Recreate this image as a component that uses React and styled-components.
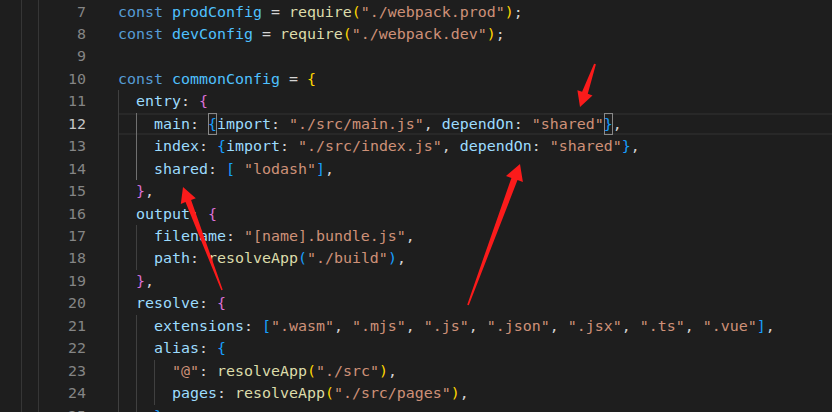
import React from "react";
import styled, { createGlobalStyle } from "styled-components";

const CHAR = 9;
const LINE = 22.46;

const colors = {
  kw: "#569cd6",
  cst: "#4fc1ff",
  fn: "#dcdcaa",
  str: "#ce9178",
  prop: "#9cdcfe",
  p: "#d4d4d4",
  b1: "#ffd700",
  b2: "#da70d6",
  b3: "#179fff",
};

// [line number, indent level, tokens]
const lines = [
  [7, 0, [["kw", "const"], ["p", " "], ["cst", "prodConfig"], ["p", " = "], ["fn", "require"], ["b1", "("], ["str", '"./webpack.prod"'], ["b1", ")"], ["p", ";"]]],
  [8, 0, [["kw", "const"], ["p", " "], ["cst", "devConfig"], ["p", " = "], ["fn", "require"], ["b1", "("], ["str", '"./webpack.dev"'], ["b1", ")"], ["p", ";"]]],
  [9, 0, []],
  [10, 0, [["kw", "const"], ["p", " "], ["cst", "commonConfig"], ["p", " = "], ["b1", "{"]]],
  [11, 1, [["prop", "entry"], ["p", ": "], ["b2", "{"]]],
  [12, 2, [["prop", "main"], ["p", ": "], ["b3", "{", true], ["prop", "import"], ["p", ": "], ["str", '"./src/main.js"'], ["p", ", "], ["prop", "dependOn"], ["p", ": "], ["str", '"shared"'], ["b3", "}", true], ["p", ","]]],
  [13, 2, [["prop", "index"], ["p", ": "], ["b3", "{"], ["prop", "import"], ["p", ": "], ["str", '"./src/index.js"'], ["p", ", "], ["prop", "dependOn"], ["p", ": "], ["str", '"shared"'], ["b3", "}"], ["p", ","]]],
  [14, 2, [["prop", "shared"], ["p", ": "], ["b3", "["], ["p", " "], ["str", '"lodash"'], ["b3", "]"], ["p", ","]]],
  [15, 1, [["b2", "}"], ["p", ","]]],
  [16, 1, [["prop", "output"], ["p", ": "], ["b2", "{"]]],
  [17, 2, [["prop", "filename"], ["p", ": "], ["str", '"[name].bundle.js"'], ["p", ","]]],
  [18, 2, [["prop", "path"], ["p", ": "], ["fn", "resolveApp"], ["b3", "("], ["str", '"./build"'], ["b3", ")"], ["p", ","]]],
  [19, 1, [["b2", "}"], ["p", ","]]],
  [20, 1, [["prop", "resolve"], ["p", ": "], ["b2", "{"]]],
  [21, 2, [["prop", "extensions"], ["p", ": "], ["b3", "["], ["str", '".wasm"'], ["p", ", "], ["str", '".mjs"'], ["p", ", "], ["str", '".js"'], ["p", ", "], ["str", '".json"'], ["p", ", "], ["str", '".jsx"'], ["p", ", "], ["str", '".ts"'], ["p", ", "], ["str", '".vue"'], ["b3", "]"], ["p", ","]]],
  [22, 2, [["prop", "alias"], ["p", ": "], ["b3", "{"]]],
  [23, 3, [["str", '"@"'], ["p", ": "], ["fn", "resolveApp"], ["b1", "("], ["str", '"./src"'], ["b1", ")"], ["p", ","]]],
  [24, 3, [["prop", "pages"], ["p", ": "], ["fn", "resolveApp"], ["b1", "("], ["str", '"./src/pages"'], ["b1", ")"], ["p", ","]]],
  [25, 2, [["b3", "}"], ["p", ","]]],
];

const ACTIVE_LINE = 12;
const activeGuide = (n, i) => n >= 12 && n <= 14 && i === 1;

const arrows = [
  { tail: [595, 64], tip: [580, 107], head: 15, half: 8, wHead: 6, wTail: 2 },
  { tail: [222, 290], tip: [183, 187], head: 15, half: 8, wHead: 6, wTail: 1.6 },
  { tail: [468, 305], tip: [520, 164], head: 16, half: 9, wHead: 6.5, wTail: 1.8 },
];

const arrowPoints = ({ tail, tip, head, half, wHead, wTail }) => {
  const dx = tip[0] - tail[0];
  const dy = tip[1] - tail[1];
  const len = Math.hypot(dx, dy);
  const ux = dx / len;
  const uy = dy / len;
  const nx = -uy;
  const ny = ux;
  const bx = tip[0] - ux * head;
  const by = tip[1] - uy * head;
  const pts = [
    [tail[0] + (nx * wTail) / 2, tail[1] + (ny * wTail) / 2],
    [bx + (nx * wHead) / 2, by + (ny * wHead) / 2],
    [bx + nx * half, by + ny * half],
    tip,
    [bx - nx * half, by - ny * half],
    [bx - (nx * wHead) / 2, by - (ny * wHead) / 2],
    [tail[0] - (nx * wTail) / 2, tail[1] - (ny * wTail) / 2],
  ];
  return pts.map((p) => p.map((v) => v.toFixed(1)).join(",")).join(" ");
};

const App = () => {
  return (
    <>
      <GlobalStyle />
      <Editor>
        <Strip $w={21} />
        <Strip $w={16} />
        <Lines>
          {lines.map(([n, indent, tokens]) => (
            <Row key={n}>
              <LineNo $active={n === ACTIVE_LINE}>{n}</LineNo>
              <Code $active={n === ACTIVE_LINE}>
                {Array.from({ length: indent }).map((_, i) => (
                  <Guide key={i} $active={activeGuide(n, i)} />
                ))}
                {tokens.map(([type, text, match], i) => (
                  <Tok key={i} $c={colors[type]} $match={match}>
                    {text}
                  </Tok>
                ))}
              </Code>
            </Row>
          ))}
        </Lines>
        <Overlay width="832" height="412" viewBox="0 0 832 412">
          {arrows.map((a, i) => (
            <polygon key={i} points={arrowPoints(a)} fill="#fb1b1b" />
          ))}
        </Overlay>
      </Editor>
    </>
  );
};

export default App;

const GlobalStyle = createGlobalStyle`
  html, body {
    margin: 0;
    padding: 0;
    background: #1e1e1e;
  }

  body {
    overflow: hidden;
  }
`;

const Editor = styled.div`
  position: relative;
  display: flex;
  width: 832px;
  height: 412px;
  overflow: hidden;
  background: #1e1e1e;
  font-family: "DejaVu Sans Mono", "Liberation Mono", monospace;
  font-size: 14.95px;
`;

const Strip = styled.div`
  flex: none;
  width: ${(p) => p.$w}px;
  border-right: 1px solid #363636;
`;

const Lines = styled.div`
  flex: 1;
  display: flex;
  flex-direction: column;
  padding-top: 0.5px;
`;

const Row = styled.div`
  display: flex;
  flex: none;
  height: ${LINE}px;
  line-height: ${LINE}px;
`;

const LineNo = styled.div`
  flex: none;
  width: 79px;
  padding-right: 32px;
  box-sizing: border-box;
  text-align: right;
  color: ${(p) => (p.$active ? "#c6c6c6" : "#858585")};
`;

const Code = styled.div`
  flex: 1;
  display: flex;
  white-space: pre;
  box-shadow: ${(p) =>
    p.$active ? "inset 0 2px #282828, inset 0 -2px #282828" : "none"};
`;

const Guide = styled.span`
  flex: none;
  width: ${CHAR * 2}px;
  box-shadow: inset 1px 0 ${(p) => (p.$active ? "#707070" : "#404040")};
`;

const Tok = styled.span`
  color: ${(p) => p.$c};
  box-shadow: ${(p) => (p.$match ? "inset 0 0 0 1px #888888" : "none")};
`;

const Overlay = styled.svg`
  position: absolute;
  left: 0;
  top: 0;
  pointer-events: none;
`;
